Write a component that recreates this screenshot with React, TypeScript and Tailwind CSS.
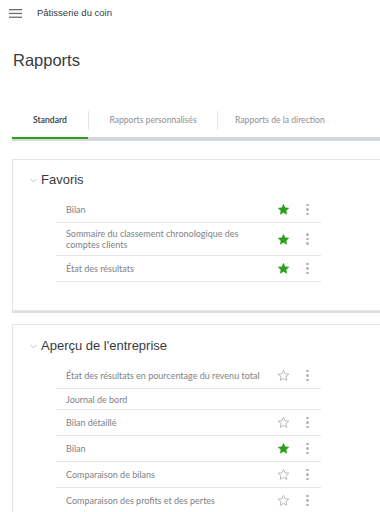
import React from 'react';
import { ChevronDown } from 'lucide-react';

interface ReportRow {
  label: string;
  fav?: boolean;
  noActions?: boolean;
  tall?: boolean;
}

const favoris: ReportRow[] = [
  { label: 'Bilan', fav: true },
  { label: 'Sommaire du classement chronologique des comptes clients', fav: true, tall: true },
  { label: 'État des résultats', fav: true },
];

const apercu: ReportRow[] = [
  { label: 'État des résultats en pourcentage du revenu total' },
  { label: 'Journal de bord', noActions: true },
  { label: 'Bilan détaillé' },
  { label: 'Bilan', fav: true },
  { label: 'Comparaison de bilans' },
  { label: 'Comparaison des profits et des pertes' },
];

const Star = ({ filled }: { filled?: boolean }) => (
  <svg width="13" height="13" viewBox="0 0 24 24">
    <path
      d="M12 2.5l2.9 6.3 6.9.7-5.2 4.6 1.5 6.8L12 17.4l-6.1 3.5 1.5-6.8-5.2-4.6 6.9-.7z"
      fill={filled ? '#2ca01c' : 'none'}
      stroke={filled ? '#2ca01c' : '#a8abb0'}
      strokeWidth={filled ? 1 : 1.5}
      strokeLinejoin="round"
    />
  </svg>
);

const Dots = () => (
  <div className="flex flex-col items-center gap-[2px]">
    <span className="w-[2.5px] h-[2.5px] rounded-full bg-[#b0b3b8]" />
    <span className="w-[2.5px] h-[2.5px] rounded-full bg-[#b0b3b8]" />
    <span className="w-[2.5px] h-[2.5px] rounded-full bg-[#b0b3b8]" />
  </div>
);

const Row = ({ row }: { row: ReportRow }) => (
  <div
    className={
      'flex items-center border-b border-[#e3e5e8] pl-[10px] ' +
      (row.tall ? 'h-[33px]' : row.noActions ? 'h-[21px]' : 'h-[26px]')
    }
  >
    <div className="w-[196px] flex-none text-[9px] leading-[11px] text-[#808287]">{row.label}</div>
    {!row.noActions && (
      <div className="flex items-center ml-[15px]">
        <Star filled={row.fav} />
        <div className="ml-[16px]">
          <Dots />
        </div>
      </div>
    )}
  </div>
);

const Section = ({
  title,
  rows,
  className,
}: {
  title: string;
  rows: ReportRow[];
  className?: string;
}) => (
  <div
    className={
      'ml-3 -mr-4 border border-[#e3e5e8] bg-white shadow-[0_2px_0_#dcdee2] ' + (className ?? '')
    }
  >
    <div
      className="flex items-center pl-[15px] h-[16px]"
      style={{ fontFamily: '"Liberation Sans", Arial, sans-serif' }}
    >
      <ChevronDown className="w-[11px] h-[11px] text-[#8d9096]" strokeWidth={1.2} />
      <span className="ml-[2px] text-[13px] text-[#393a3d]">{title}</span>
    </div>
    <div className="ml-[43px] mt-[9px] w-[265px]">
      {rows.map((r, i) => (
        <Row key={i} row={r} />
      ))}
    </div>
  </div>
);

export default function App() {
  return (
    <div
      className="w-[380px] h-[512px] overflow-hidden bg-white"
      style={{ fontFamily: '"Liberation Sans", Arial, sans-serif' }}
    >
      {/* top bar */}
      <div className="flex items-center h-[26px] pl-[9px]">
        <svg width="13" height="9" viewBox="0 0 13 9">
          <rect x="0" y="0" width="13" height="1.3" fill="#6b6c72" />
          <rect x="0" y="3.8" width="13" height="1.3" fill="#6b6c72" />
          <rect x="0" y="7.6" width="13" height="1.3" fill="#6b6c72" />
        </svg>
        <span className="ml-[15px] text-[9.5px] text-[#393a3d]">Pâtisserie du coin</span>
      </div>

      <h1 className="mt-[24px] ml-[13px] text-[16.5px] leading-[20px] text-[#393a3d]">Rapports</h1>

      {/* tabs */}
      <div className="mt-[34px] ml-3">
        <div className="flex items-center h-[33px] text-[8.6px]" style={{ fontFamily: 'Lato, sans-serif' }}>
          <div className="w-[76px] text-center font-semibold text-[#393a3d]">Standard</div>
          <div className="w-px h-[19px] bg-[#e3e5e8]" />
          <div className="w-[128px] text-center text-[#8d9096]">Rapports personnalisés</div>
          <div className="w-px h-[19px] bg-[#e3e5e8]" />
          <div className="pl-[17px] text-[#8d9096]">Rapports de la direction</div>
        </div>
        <div className="h-[4px] bg-[#d4d7dc] flex">
          <div className="w-[76px] h-[2px] bg-[#2ca01c]" />
        </div>
      </div>

      <div style={{ fontFamily: 'Lato, sans-serif' }}>
        <Section title="Favoris" rows={favoris} className="mt-[18px] pt-[12px] pb-[28px]" />
        <Section title="Aperçu de l'entreprise" rows={apercu} className="mt-[13px] pt-[13px]" />
      </div>
    </div>
  );
}
